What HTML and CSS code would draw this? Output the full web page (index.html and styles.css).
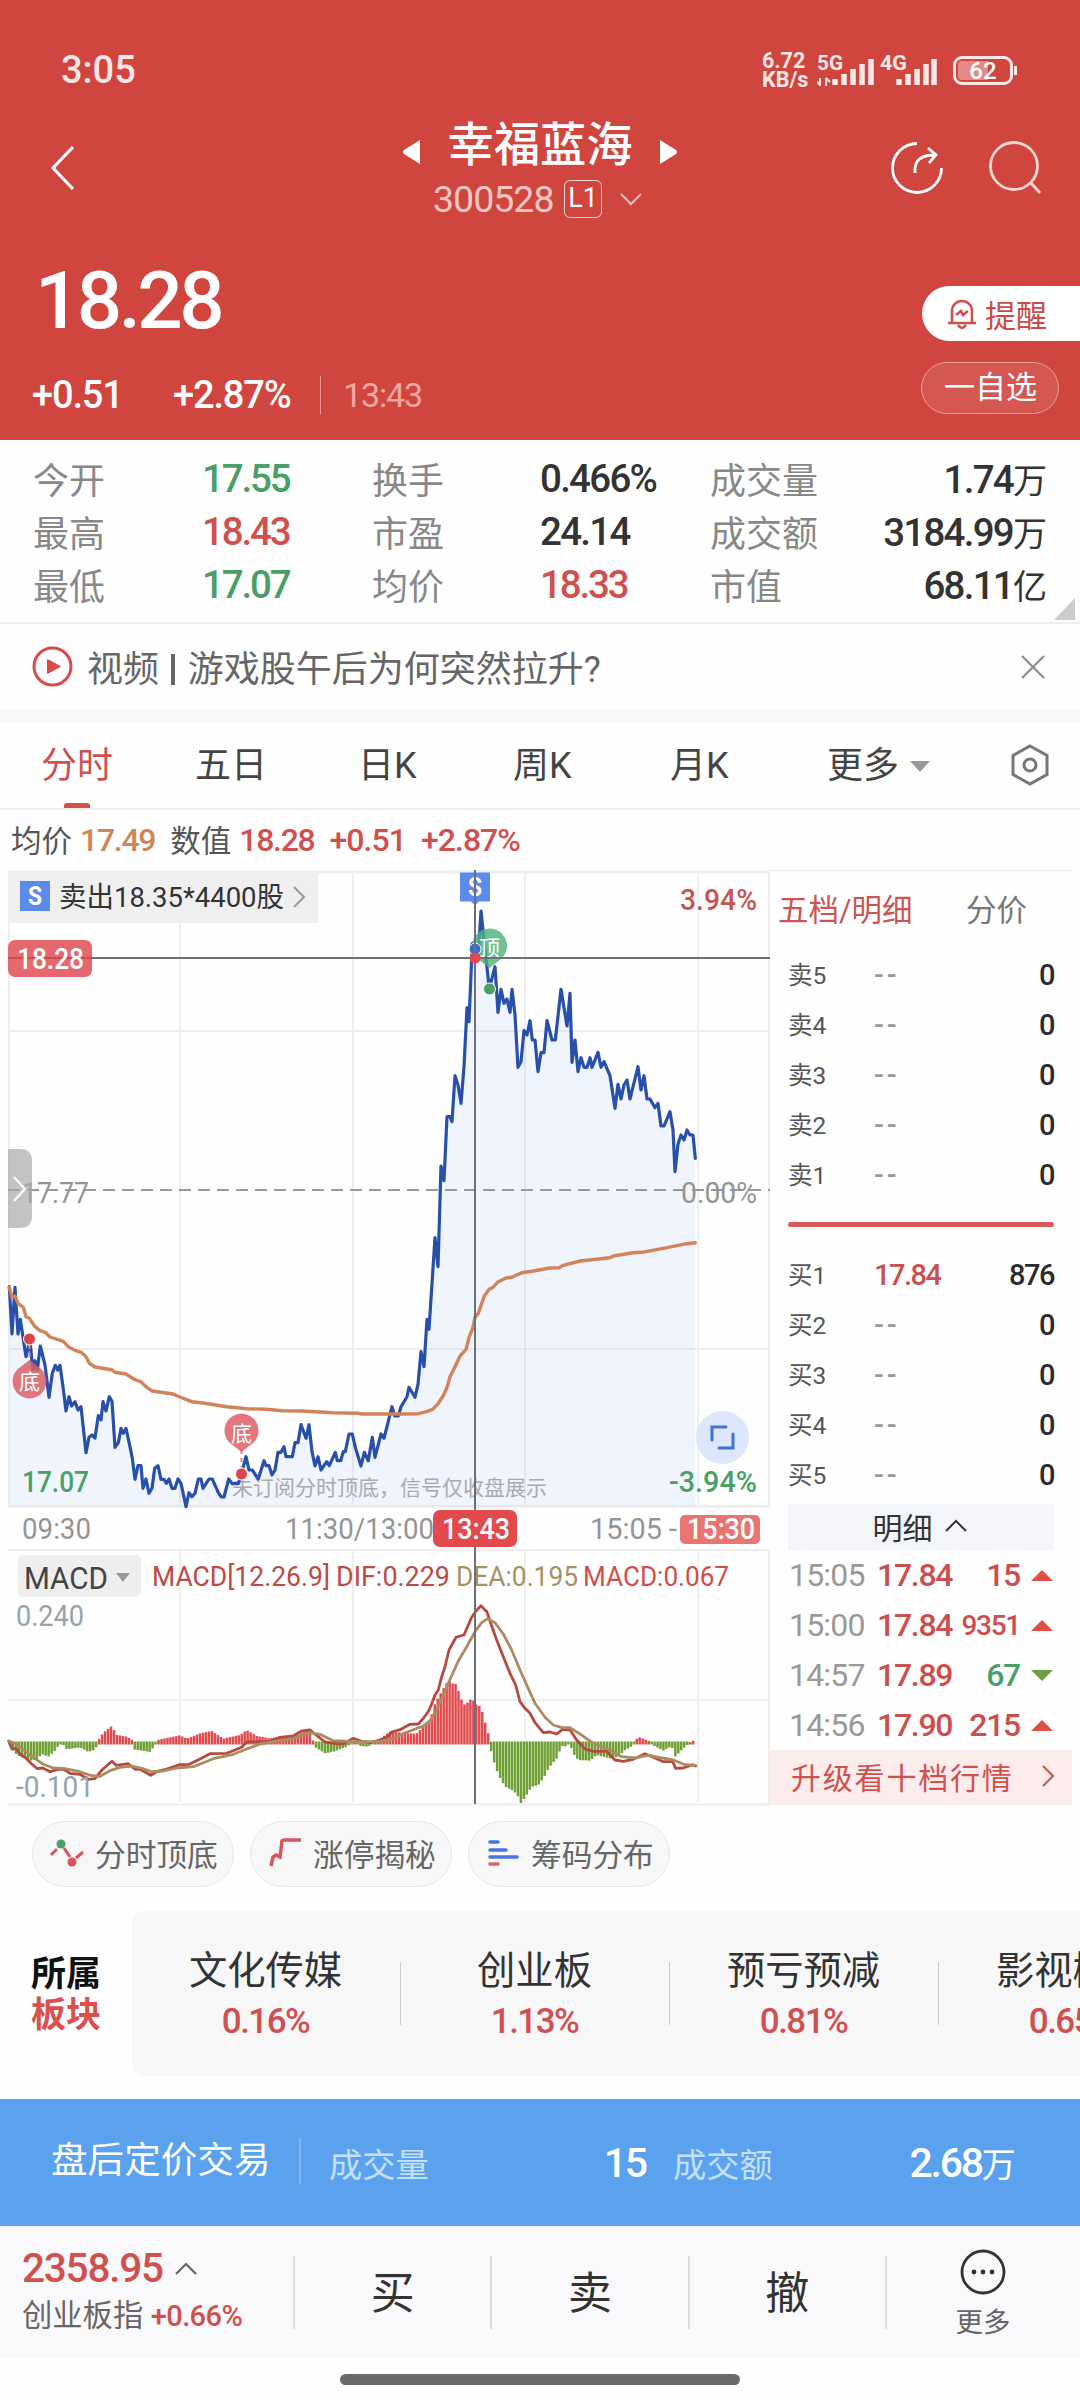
FILE: index.html
```html
<!DOCTYPE html>
<html lang="zh-CN">

<head>
  <meta charset="utf-8">
  <meta name="viewport" content="width=device-width, initial-scale=1.0">
  <title>幸福蓝海 300528</title>
  <link rel="stylesheet" href="styles.css">
</head>

<body>
  <header class="header">
    <div class="status">
      <span class="clock">3:05</span>
      <div class="speed"><span>6.72</span><span>KB/s</span></div>
      <svg class="signals" width="122" height="40" viewBox="820 48 122 40">
        <text x="820" y="68" textLength="26" lengthAdjust="spacingAndGlyphs">5G</text>
        <text x="883" y="68" textLength="27" lengthAdjust="spacingAndGlyphs">4G</text>
        <path d="M823 76v8M829 76v8M819 79l4 4M833 80l-4-4" stroke-width="2" />
        <path d="M838 83v-6M847 83v-11M856 83v-16M865 83v-21M874 83v-26M902 83v-6M911 83v-11M920 83v-16M929 83v-21M937 83v-26" stroke-width="5.5" />
      </svg>
      <div class="battery"><span>62</span></div>
    </div>

    <div class="title-bar">
      <svg class="back" width="26" height="46" viewBox="0 0 26 46"><path d="M23 2L3 23l20 21" /></svg>
      <div class="title">
        <div class="name">
          <svg width="17" height="24" viewBox="0 0 17 24"><path d="M17 0v24L1 14q-2-2 0-4z" fill="#fff" /></svg>
          <h1>幸福蓝海</h1>
          <svg width="17" height="24" viewBox="0 0 17 24"><path d="M0 0v24L16 14q2-2 0-4z" fill="#fff" /></svg>
        </div>
        <div class="code">
          <span class="num">300528</span>
          <span class="level">L1</span>
          <svg width="22" height="14" viewBox="0 0 22 14"><path d="M1 2l10 10L21 2" fill="none" stroke="#f3bbb7" stroke-width="2" /></svg>
        </div>
      </div>
      <svg class="share" width="54" height="54" viewBox="0 0 54 54"><path d="M27 2.500A24.500 24.500 0 1 0 51.500 27M25 32c-1-13 6-18 20-18M38 7l8 7-7 8" /></svg>
      <svg class="search" width="54" height="54" viewBox="0 0 54 54"><circle cx="26" cy="25" r="23.500" /><path d="M43 42l9 10" /></svg>
    </div>

    <div class="quote">
      <div>
        <div class="price num">18.28</div>
        <div class="change num">
          <span class="diff">+0.51</span>
          <span class="rate">+2.87%</span>
          <span class="time">13:43</span>
        </div>
      </div>
      <div class="actions">
        <div class="remind">
          <svg width="30" height="32" viewBox="0 0 30 32"><path d="M5 24V13a10 10 0 0 1 20 0v11M1 25h28M11 27q4 6 8 0M9 17l5-4 2 4 5-4" /></svg>
          提醒
        </div>
        <div class="watch">一自选</div>
      </div>
    </div>
  </header>

  <section class="stats">
    <span>今开</span><b class="num green">17.55</b><span>换手</span><b class="num">0.466%</b><span>成交量</span><b class="num last">1.74<i>万</i></b>
    <span>最高</span><b class="num red">18.43</b><span>市盈</span><b class="num">24.14</b><span>成交额</span><b class="num last">3184.99<i>万</i></b>
    <span>最低</span><b class="num green">17.07</b><span>均价</span><b class="num red">18.33</b><span>市值</span><b class="num last">68.11<i>亿</i></b>
    <div class="corner"></div>
  </section>

  <section class="news">
    <svg width="41" height="41" viewBox="0 0 41 41"><circle cx="20.500" cy="20.500" r="18.500" fill="none" stroke="#d94b4b" stroke-width="3" /><path d="M15.500 13.500v14l13-7z" fill="#d94b4b" stroke="#d94b4b" stroke-linejoin="round" /></svg>
    <p>视频 <em></em> 游戏股午后为何突然拉升?</p>
    <svg width="24" height="24" viewBox="0 0 24 24"><path d="M1 1l22 22M23 1L1 23" stroke="#888" stroke-width="2" /></svg>
  </section>

  <nav class="tabs">
    <a class="active">分时</a>
    <a>五日</a>
    <a>日K</a>
    <a>周K</a>
    <a>月K</a>
    <a class="more">更多</a>
    <svg width="40" height="42" viewBox="0 0 40 42"><path d="M20 2l17 9.500v19L20 40 3 30.500v-19z" /><circle cx="20" cy="21" r="6" /></svg>
  </nav>

  <div class="legend">
    <span>均价</span><b class="num orange">17.49</b><span>数值</span><b class="num red">18.28</b><b class="num red">+0.51</b><b class="num red">+2.87%</b>
  </div>

  <main class="market">
    <svg class="chart" width="770" height="936" viewBox="0 870 770 936">
      <g class="grid">
        <path d="M8 872H770M8 1506.500H770" stroke-width="3" />
        <path d="M8 1031H769M8 1349H769M9 871V1506M180 871V1508M353 871V1508M525 871V1508M698 871V1508M769 871V1508M8 1550H769M8 1700H769M180 1550V1802M353 1550V1802M525 1550V1802M698 1550V1802M769 1550V1804" />
        <path d="M8 1804.500H770" stroke-width="1.500" />
      </g>

      <!-- trade note -->
      <rect x="8" y="871" width="310" height="52" fill="#efefef" />
      <rect x="20" y="881" width="30" height="30" fill="#5c8bed" />
      <text class="badge" x="28" y="905" textLength="14" lengthAdjust="spacingAndGlyphs">S</text>
      <text class="note" x="59" y="907" textLength="225" lengthAdjust="spacingAndGlyphs">卖出18.35*4400股</text>
      <path d="M294 887l10 10-10 10" fill="none" stroke="#999" stroke-width="2" />

      <path id="area" fill="#5a95f5" fill-opacity=".09" />
      <text class="hint" x="232" y="1495" textLength="315">未订阅分时顶底，信号仅收盘展示</text>
      <path id="price" class="line" stroke="#2850aa" stroke-width="3.200" />
      <path id="average" class="line" stroke="#d3835a" stroke-width="3.400" />

      <path d="M8 1190H770" stroke="#999" stroke-width="2" stroke-dasharray="12 7" />
      <text class="axis gray" x="22" y="1203" textLength="67" lengthAdjust="spacingAndGlyphs">17.77</text>
      <text class="axis gray" x="681" y="1203" textLength="76" lengthAdjust="spacingAndGlyphs">0.00%</text>
      <text class="axis up" x="680" y="910" textLength="77" lengthAdjust="spacingAndGlyphs">3.94%</text>
      <text class="axis down" x="22" y="1492" textLength="67" lengthAdjust="spacingAndGlyphs">17.07</text>
      <text class="axis down" x="669" y="1492" textLength="88" lengthAdjust="spacingAndGlyphs">-3.94%</text>

      <!-- macd -->
      <g id="bars"></g>
      <path id="dif" class="line" stroke="#b9493f" stroke-width="2.800" />
      <path id="dea" class="line" stroke="#ab8c61" stroke-width="2.800" />
      <rect x="18" y="1555" width="123" height="42" rx="5" fill="#eee" />
      <text x="24" y="1589" class="macd" textLength="84" lengthAdjust="spacingAndGlyphs">MACD</text>
      <path d="M116 1573h14l-7 9z" fill="#999" />
      <text class="info" x="152" y="1586" fill="#bb4b43" textLength="178" lengthAdjust="spacingAndGlyphs">MACD[12.26.9]</text>
      <text class="info" x="336" y="1586" fill="#bb4b43" textLength="114" lengthAdjust="spacingAndGlyphs">DIF:0.229</text>
      <text class="info" x="456" y="1586" fill="#a8905f" textLength="122" lengthAdjust="spacingAndGlyphs">DEA:0.195</text>
      <text class="info" x="583" y="1586" fill="#d04f4c" textLength="146" lengthAdjust="spacingAndGlyphs">MACD:0.067</text>
      <text class="axis slate" x="16" y="1626" textLength="68" lengthAdjust="spacingAndGlyphs">0.240</text>
      <text class="axis slate" x="16" y="1797" textLength="78" lengthAdjust="spacingAndGlyphs">-0.101</text>

      <!-- time axis -->
      <text class="axis gray" x="22" y="1539" textLength="69" lengthAdjust="spacingAndGlyphs">09:30</text>
      <text class="axis gray" x="285" y="1539" textLength="149" lengthAdjust="spacingAndGlyphs">11:30/13:00</text>
      <text class="axis gray" x="590" y="1539" textLength="87" lengthAdjust="spacingAndGlyphs">15:05 -</text>
      <rect x="680" y="1515" width="80" height="29" rx="5" fill="#e87571" />
      <text class="axis white" x="687" y="1539" textLength="68" lengthAdjust="spacingAndGlyphs">15:30</text>

      <!-- signals -->
      <path d="M29.500 1345v15M241.500 1450v22" stroke="#e0878a" stroke-width="2" stroke-dasharray="4 4" />
      <g fill="#dc5f65" fill-opacity=".85">
        <path d="M29.500 1360l9 7a17 17 0 1 1-18 0z" />
        <path d="M241.500 1452l9-7a17 17 0 1 0-18 0z" />
      </g>
      <text class="pin" x="19" y="1389">底</text>
      <text class="pin" x="231" y="1441">底</text>
      <path d="M489.500 968l9-7a17.500 17.500 0 1 0-18 0z" fill="#4db07a" fill-opacity=".8" />
      <text class="pin" x="479" y="955">顶</text>
      <g stroke="#fff" stroke-width="1">
        <circle cx="29.500" cy="1339" r="6" fill="#d8474b" />
        <circle cx="241.500" cy="1474" r="6" fill="#d8474b" />
        <circle cx="489.500" cy="989" r="6" fill="#4a9f66" />
        <circle cx="475" cy="949" r="6" fill="#3a6fd0" />
      </g>
      <path d="M460 872.500h30v29h-11l-4 4-4-4h-11z" fill="#5c8bed" />
      <text class="badge" x="468" y="896" textLength="14" lengthAdjust="spacingAndGlyphs">S</text>

      <!-- crosshair -->
      <rect x="8" y="940" width="84" height="37" rx="7" fill="#e5686c" />
      <path d="M8 958H92" stroke="#c94d50" stroke-width="2" />
      <path d="M92 958H770M475 870V1804" stroke="#6b707b" stroke-width="2" />
      <circle cx="475" cy="958" r="5.500" fill="#e04a4e" />
      <text class="axis white" x="17" y="969" textLength="67" lengthAdjust="spacingAndGlyphs">18.28</text>
      <rect x="433" y="1510" width="84" height="37" rx="7" fill="#e24a4d" />
      <text class="axis white" x="442" y="1539" textLength="68" lengthAdjust="spacingAndGlyphs">13:43</text>

      <path d="M8 1149h12q12 0 12 12v55q0 12-12 12H8z" fill="#aaa" fill-opacity=".7" />
      <path d="M14 1177l11 12-11 12" fill="none" stroke="#fff" stroke-width="2" />

      <circle cx="722.500" cy="1437.500" r="26.500" fill="#dde7fb" />
      <path d="M712 1440v-13h14M719 1448h14v-14" fill="none" stroke="#3f72d9" stroke-width="3" stroke-linecap="round" />
    </svg>

    <aside class="book">
      <div class="book-tabs"><span class="active">五档/明细</span><span>分价</span></div>
      <div class="level-row"><span>卖5</span><i>--</i><b>0</b></div>
      <div class="level-row"><span>卖4</span><i>--</i><b>0</b></div>
      <div class="level-row"><span>卖3</span><i>--</i><b>0</b></div>
      <div class="level-row"><span>卖2</span><i>--</i><b>0</b></div>
      <div class="level-row"><span>卖1</span><i>--</i><b>0</b></div>
      <div class="ratio"></div>
      <div class="level-row"><span>买1</span><i class="red">17.84</i><b>876</b></div>
      <div class="level-row"><span>买2</span><i>--</i><b>0</b></div>
      <div class="level-row"><span>买3</span><i>--</i><b>0</b></div>
      <div class="level-row"><span>买4</span><i>--</i><b>0</b></div>
      <div class="level-row"><span>买5</span><i>--</i><b>0</b></div>
      <div class="detail">明细 <svg width="22" height="13" viewBox="0 0 22 13"><path d="M1 12L11 2l10 10" fill="none" stroke="#333" stroke-width="2" /></svg></div>
      <div class="tick num"><span>15:05</span><b>17.84</b><i>15</i><em></em></div>
      <div class="tick num"><span>15:00</span><b>17.84</b><i class="small">9351</i><em></em></div>
      <div class="tick num"><span>14:57</span><b>17.89</b><i class="green">67</i><em class="fall"></em></div>
      <div class="tick num"><span>14:56</span><b>17.90</b><i>215</i><em></em></div>
      <div class="upgrade">升级看十档行情 <svg width="12" height="22" viewBox="0 0 12 22"><path d="M1 1l10 10L1 21" fill="none" stroke="#d0504e" stroke-width="2" /></svg></div>
    </aside>
  </main>

  <div class="chips">
    <div class="chip">
      <svg width="34" height="32" viewBox="0 0 34 32"><path d="M1 18l6-6M14 11l6 9M26 21l7-6" fill="none" stroke="#d9555a" stroke-width="3" /><circle cx="11" cy="7" r="4.500" fill="#4a9f66" /><circle cx="22" cy="25" r="4.500" fill="#d9555a" /></svg>
      分时顶底
    </div>
    <div class="chip">
      <svg width="34" height="32" viewBox="0 0 34 32"><path d="M3 29l2-9 3-2 4 2 2-16q1-1 2-1h17" fill="none" stroke="#d9555a" stroke-width="3.500" /></svg>
      涨停揭秘
    </div>
    <div class="chip">
      <svg width="34" height="32" viewBox="0 0 34 32"><path d="M4 5h8M4 13h16M4 20h27" stroke="#4a76dc" stroke-width="3.500" stroke-linecap="round" /><path d="M4 27h8" stroke="#d9666a" stroke-width="3.500" stroke-linecap="round" /></svg>
      筹码分布
    </div>
  </div>

  <section class="sectors">
    <h2>所属<br><span>板块</span></h2>
    <div class="sector-list">
      <div class="sector">文化传媒<b class="num">0.16%</b></div>
      <div class="sector">创业板<b class="num">1.13%</b></div>
      <div class="sector">预亏预减<b class="num">0.81%</b></div>
      <div class="sector">影视概念<b class="num">0.65%</b></div>
    </div>
  </section>

  <section class="after-hours">
    <span class="label">盘后定价交易</span>
    <span class="key">成交量</span><b class="num volume">15</b>
    <span class="key">成交额</span><b class="num amount">2.68<i>万</i></b>
  </section>

  <footer class="footer">
    <div class="index">
      <div class="point num">2358.95 <svg width="22" height="13" viewBox="0 0 22 13"><path d="M1 12L11 2l10 10" fill="none" stroke="#666" stroke-width="2.200" /></svg></div>
      <div class="index-name">创业板指 <b class="num">+0.66%</b></div>
    </div>
    <div class="trade">买</div>
    <div class="trade">卖</div>
    <div class="trade">撤</div>
    <div class="others">
      <svg width="46" height="46" viewBox="0 0 46 46"><circle cx="23" cy="23" r="21" fill="none" stroke="#333" stroke-width="2.800" /><g fill="#333"><circle cx="14" cy="23" r="2.400" /><circle cx="23" cy="23" r="2.400" /><circle cx="32" cy="23" r="2.400" /></g></svg>
      更多
    </div>
  </footer>
  <div class="home-bar"></div>

  <script src="chart.js"></script>
</body>

</html>
```
FILE: styles.css
```css
* {
  box-sizing: border-box;
}

body {
  margin: 0;
  width: 1080px;
  height: 2400px;
  overflow: hidden;
  background-color: #fefefe;
  color: #333;
  font-family: Roboto, "Noto Sans CJK SC", sans-serif;
}

svg {
  display: block;
  flex: none;
}

i, em {
  font-style: normal;
}

b {
  font-weight: 500;
}

.num {
  font-weight: 500;
  letter-spacing: -0.045em;
}

.red {
  color: #d04f4f;
}

.green {
  color: #4a9f66;
}

.orange {
  color: #cf8657;
}

/* header */
.header {
  height: 440px;
  background-color: #d0453e;
  color: #fff;
}

.status {
  display: flex;
  align-items: center;
  height: 140px;
  padding-left: 61px;
}

.clock {
  width: 701px;
  font-size: 38px;
  font-weight: 500;
  color: #fde8e6;
}

.speed {
  display: flex;
  flex-direction: column;
  gap: 2px;
  width: 55px;
  font-size: 21.5px;
  line-height: 17px;
  font-weight: 700;
  color: #fde8e6;
}

.signals {
  stroke: #fde8e6;
  fill: none;
}

.signals text {
  stroke: none;
  fill: #fde8e6;
  font-size: 20px;
  font-weight: 700;
}

.battery {
  position: relative;
  width: 60px;
  height: 29px;
  margin-left: 14px;
  border: 3px solid #fde8e6;
  border-radius: 9px;
  background: linear-gradient(90deg, #e48a86 60%, transparent 60%);
  background-clip: content-box;
  padding: 2px;
  text-align: center;
  font-size: 24px;
  line-height: 20px;
  font-weight: 500;
}

.battery::after {
  content: "";
  position: absolute;
  right: -7px;
  top: 7px;
  width: 3px;
  height: 9px;
  background-color: #fde8e6;
}

.title-bar {
  display: flex;
  height: 98px;
  margin-top: -22px;
  padding-left: 50px;
}

.back {
  margin-top: 27px;
}

.back path {
  fill: none;
  stroke: #fff;
  stroke-width: 3.2;
}

.title {
  width: 602px;
  margin-left: 163px;
}

.name {
  display: flex;
  justify-content: center;
  align-items: center;
  height: 54px;
}

.name svg {
  margin-top: 14px;
}

.name h1 {
  margin: 0 27px;
  font-size: 46.3px;
  line-height: 54px;
  font-weight: 500;
}

.code {
  display: flex;
  align-items: center;
  height: 48px;
  margin-top: 3px;
  padding-left: 194px;
}

.code .num {
  width: 131px;
  font-size: 37.5px;
  letter-spacing: -1px;
  font-weight: 400;
  color: #f6c7c4;
}

.level {
  width: 38px;
  height: 38px;
  margin-right: 18px;
  border: 1.5px solid #f8d5d3;
  border-radius: 6px;
  font-size: 27px;
  line-height: 35px;
  text-align: center;
}

.share, .search {
  margin-top: 23px;
  fill: none;
  stroke: #fff;
  stroke-width: 2.8;
}

.share {
  margin-left: 49px;
}

.search {
  margin-left: 44px;
  stroke: #f9d5d3;
}

.quote {
  display: flex;
  justify-content: space-between;
  padding-top: 38px;
}

.price {
  height: 94px;
  margin-left: 35px;
  font-size: 80px;
  line-height: 94px;
}

.change {
  display: flex;
  align-items: center;
  height: 38px;
  margin-top: 28px;
  margin-left: 32px;
  font-size: 38px;
  letter-spacing: -0.03em;
}

.diff {
  width: 141px;
}

.rate {
  width: 147px;
}

.time {
  padding-left: 22px;
  border-left: 1px solid #e59792;
  font-size: 34px;
  font-weight: 400;
  line-height: 38px;
  color: #f0a8a3;
}

.actions {
  width: 159px;
  padding-top: 32px;
}

.remind {
  display: flex;
  align-items: center;
  gap: 8px;
  height: 55px;
  margin-left: 1px;
  padding-left: 25px;
  border-radius: 28px 0 0 28px;
  background-color: #fff;
  color: #cb4c47;
  font-size: 31px;
  margin-top: 0;
}

.remind path {
  fill: none;
  stroke: #d0504c;
  stroke-width: 2.6;
}

.watch {
  width: 138px;
  height: 52px;
  margin-top: 21px;
  padding-left: 22px;
  border: 1.5px solid #e8a19d;
  border-radius: 26px;
  background-color: #d45750;
  font-size: 31px;
  line-height: 49px;
}

/* stats */
.stats {
  position: relative;
  display: grid;
  grid-template-columns: 169px 170px 168px 170px 137px 200px;
  grid-auto-rows: 53px;
  align-items: center;
  height: 184px;
  padding: 12px 33px 0;
  border-bottom: 2px solid #eee;
}

.stats span {
  margin-top: -2px;
  font-size: 36px;
  color: #888;
}

.stats b {
  font-size: 38.5px;
}

.stats .green, .stats .red {
  letter-spacing: -0.055em;
}

.stats .last {
  text-align: right;
}

.stats i, .after-hours i {
  font-size: 34px;
  font-weight: 400;
  letter-spacing: 0;
}

.corner {
  position: absolute;
  left: 1054px;
  top: 158px;
  border-left: 21px solid transparent;
  border-bottom: 22px solid #ccc;
}

.news {
  display: flex;
  align-items: center;
  height: 85px;
  padding: 0 35px 0 32px;
}

.news p {
  flex: 1;
  margin: -1px 0 0 14px;
  font-size: 36px;
  color: #666;
}

.news em {
  display: inline-block;
  width: 4px;
  height: 31px;
  margin: 0 4px 0 3px;
  background-color: #666;
  vertical-align: -3px;
}

/* tabs */
.tabs {
  display: flex;
  height: 101px;
  border-top: 13px solid #f7f7f7;
  border-bottom: 2px solid #eee;
  padding-left: 41px;
  font-size: 36px;
  line-height: 88px;
  color: #444;
}

.tabs a {
  position: relative;
  width: 159px;
}

.tabs a:first-child {
  width: 154px;
}

.tabs a:nth-child(2) {
  width: 163px;
}

.tabs a:nth-child(3) {
  width: 155px;
}

.tabs a:nth-child(4) {
  width: 157px;
}

.tabs a:nth-child(5) {
  width: 157px;
}

.tabs .active {
  color: #d04f4f;
}

.tabs .active::after {
  content: "";
  position: absolute;
  left: 23px;
  bottom: 0;
  width: 26px;
  height: 5px;
  border-radius: 3px 3px 0 0;
  background-color: #d04f4f;
}

.tabs .more {
  width: 183px;
}

.tabs .more::after {
  content: "";
  display: inline-block;
  margin-left: 11px;
  border: 10px solid transparent;
  border-bottom: 0;
  border-top: 11px solid #999;
  vertical-align: 6px;
}

.tabs svg {
  margin-top: 22px;
  fill: none;
  stroke: #777;
  stroke-width: 3;
}

.legend {
  display: flex;
  align-items: center;
  height: 60px;
  padding-left: 11px;
  font-size: 30.5px;
  color: #555;
}

.legend span {
  margin-top: -2px;
}

.legend b {
  margin: 0 15px 0 8px;
  font-size: 32px;
  letter-spacing: -0.04em;
}

.legend b + b {
  margin-left: 0;
  letter-spacing: -0.03em;
}

/* chart and order book */
.market {
  display: flex;
  height: 936px;
}

.grid path {
  fill: none;
  stroke: #eee;
  stroke-width: 2;
}

.grid path:first-child {
  stroke-width: 3;
}

.line {
  fill: none;
  stroke-linejoin: round;
  stroke-linecap: round;
}

.chart text {
  font-weight: 400;
}

.chart .badge {
  font-size: 25px;
  font-weight: 700;
  fill: #fff;
}

.note {
  font-size: 28px;
  fill: #333;
}

.hint {
  font-size: 21px;
  fill: #aaa;
}

.chart .axis {
  font-size: 29.5px;
  font-weight: 500;
}

.chart .axis.gray, .chart .axis.slate {
  font-weight: 400;
}

.axis.gray {
  fill: #949494;
}

.axis.up {
  fill: #c95352;
}

.axis.down {
  fill: #4a9f66;
}

.axis.slate {
  fill: #96a3af;
}

.axis.white {
  fill: #fff;
}

.macd {
  font-size: 32px;
  fill: #444;
}

.chart .info {
  font-size: 27.5px;
  font-weight: 400;
}

.pin {
  font-size: 21px;
  fill: #fff;
}

.book {
  width: 302px;
  border-top: 1px solid #eee;
}

.book-tabs {
  display: flex;
  height: 79px;
  padding-left: 8px;
  font-size: 30.5px;
  line-height: 79px;
  color: #777;
}

.book-tabs span {
  flex: none;
  width: 188px;
}

.book-tabs span + span {
  width: auto;
}

.book-tabs .active {
  color: #cc5452;
}

.level-row {
  display: flex;
  align-items: center;
  height: 50px;
  padding: 0 18px 0 18px;
  color: #555;
  font-size: 24.5px;
}

.level-row span {
  width: 86px;
  margin-top: -3px;
}

.level-row i {
  flex: 1;
  font-size: 29px;
  letter-spacing: 3px;
  font-weight: 500;
  color: #999;
}

.level-row i.red {
  letter-spacing: -1.5px;
  color: #cb504d;
}

.level-row b {
  font-size: 29px;
  letter-spacing: -1.5px;
  color: #2c2c2c;
}

.ratio {
  height: 5px;
  margin: 22px 18px 23px;
  border-radius: 3px;
  background-color: #d95c5b;
}

.detail {
  display: flex;
  align-items: center;
  justify-content: center;
  gap: 12px;
  height: 46px;
  margin: 4px 18px 0;
  padding: 0 3px 3px 0;
  background-color: #f3f5fa;
  font-size: 30px;
}

.tick {
  display: flex;
  align-items: center;
  height: 50px;
  padding: 0 19px 0 19px;
  font-size: 32px;
  color: #cb504d;
  letter-spacing: -0.04em;
}

.tick span {
  width: 88px;
  font-weight: 400;
  letter-spacing: -0.025em;
  color: #999;
}

.tick b {
  width: 76px;
}

.tick i {
  flex: 1;
  text-align: right;
}

.tick .small {
  font-size: 28px;
}

.tick em {
  margin-left: 11px;
  border: 11px solid transparent;
  border-top: 0;
  border-bottom: 11px solid #e04f44;
}

.tick .fall {
  border-bottom: 0;
  border-top: 11px solid #6ca046;
}

.upgrade {
  display: flex;
  align-items: center;
  justify-content: space-between;
  height: 55px;
  padding: 0 18px 3px 21px;
  background-color: #fcecec;
  color: #d0504e;
  font-size: 30px;
  letter-spacing: 1.8px;
}

.chips {
  display: flex;
  gap: 16px;
  padding: 15px 32px 0;
}

.chip {
  display: flex;
  align-items: center;
  gap: 11px;
  width: 202px;
  height: 66px;
  padding: 0 0 3px 17px;
  border: 1.5px solid #e6e6e6;
  border-radius: 33px;
  background-color: #f7f7f7;
  color: #666;
  font-size: 30.7px;
  white-space: nowrap;
}

/* sectors */
.sectors {
  display: flex;
  height: 165px;
  margin-top: 24px;
}

.sectors h2 {
  width: 132px;
  margin: 0;
  padding: 43px 0 0 31px;
  font-size: 35px;
  line-height: 41px;
  font-weight: 700;
  color: #111;
}

.sectors h2 span {
  color: #d9504f;
}

.sector-list {
  display: flex;
  width: 948px;
  overflow: hidden;
  border-radius: 12px 0 0 12px;
  background-color: #f7f7f7;
}

.sector {
  position: relative;
  flex: none;
  width: 269px;
  padding: 33px 2px 0 0;
  text-align: center;
  font-size: 38.3px;
  line-height: 54px;
}

.sector + .sector::before {
  content: "";
  position: absolute;
  left: -1px;
  top: 51px;
  width: 1px;
  height: 63px;
  background-color: #ccc;
}

.sector b {
  display: block;
  font-size: 35px;
  line-height: 48px;
  color: #d04f4f;
}

.after-hours {
  display: flex;
  align-items: center;
  height: 127px;
  margin-top: 23px;
  padding-left: 51px;
  background-color: #5aa2ee;
  color: #fff;
}

.label {
  width: 250px;
  margin-top: -3px;
  margin-right: 28px;
  border-right: 2px solid #7cb6f2;
  font-size: 36.6px;
  line-height: 46px;
}

.key {
  font-size: 33.3px;
  color: #c3e1fc;
}

.after-hours .num {
  font-size: 41px;
  letter-spacing: -0.055em;
}

.after-hours i {
  letter-spacing: 0;
}

.volume {
  width: 217px;
  margin-right: 27px;
  text-align: right;
}

.amount {
  width: 243px;
  text-align: right;
}

/* footer */
.footer {
  display: flex;
  align-items: center;
  height: 132px;
  background-color: #f9f9fc;
}

.index {
  width: 293px;
  padding-left: 22px;
}

.point {
  display: flex;
  align-items: center;
  gap: 12px;
  height: 50px;
  margin-top: -2px;
  font-size: 40.5px;
  letter-spacing: -0.03em;
  color: #d0504c;
}

.index-name {
  font-size: 30.3px;
  line-height: 46px;
  color: #666;
}

.index-name .num {
  font-size: 29px;
  letter-spacing: -0.02em;
  color: #d0504c;
}

.trade, .others {
  flex: none;
  width: 197.3px;
  height: 73px;
  border-left: 2px solid #ddd;
  text-align: center;
  font-size: 44px;
  line-height: 76px;
}

.others {
  width: 194px;
  font-size: 27.5px;
  line-height: 38px;
  color: #666;
}

.others svg {
  margin: -7px auto 9px;
}

.home-bar {
  width: 400px;
  height: 11px;
  margin: 16px auto 0;
  border-radius: 6px;
  background-color: #6b6b6b;
}
```
FILE: chart.js
```js
// points are kept in thirds of a pixel, each list with its own origin
const morning = '28,290 36,432 45,292 54,432 61,388 78,500 90,450 98,540 105,512 112,540 121,468 135,525 147,622 157,550 166,526 173,540 180,526 189,590 198,663 207,620 215,648 225,635 234,660 243,650 258,788 267,742 276,735 285,744 295,677 303,690 309,635 318,663 328,620 336,634 345,772 355,758 363,715 370,730 378,715 390,770 397,805 405,868 414,827 423,827 429,895 438,867 447,910 456,895 464,835 474,827 483,868 492,868 499,880 507,867 516,895 525,895 534,867 543,880 558,950 567,908 576,920 585,910 595,867 603,867 609,895 627,867 637,867 655,908 664,921 672,921 686,867 697,881 715,881 724,852 738,800 747,840 757,840 775,867 792,812 798,827 807,827 816,855 825,840 834,787 843,787 852,770 858,800 877,800 885,758 894,758 903,704 918,745 927,704 936,785 945,828 954,800 963,840 980,815 988,827 1006,787 1012,812 1022,812 1030,785 1036,785 1047,732 1057,732 1066,772 1083,828 1093,787 1105,812 1117,742 1125,802 1143,732 1152,745 1176,650 1184,678 1195,678 1203,650 1221,620 1227,592 1245,622 1254,583 1263,485 1272,530 1281,388 1287,418 1305,143 1314,230';
const afternoon = '123,918 132,962 141,770 150,770 156,785 165,647 174,675 183,730 192,620 201,443 207,485 217,250 225,270 234,300 243,153 252,240 268,386 285,320 294,457 303,388 312,430 321,417 330,457 336,388 345,465 354,622 363,605 372,512 381,525 390,482 397,540 405,540 414,635 423,578 432,578 441,482 456,540 466,540 483,388 501,498 510,400 516,607 525,540 534,635 543,593 552,622 561,622 570,593 576,622 594,577 603,622 612,605 630,647 645,745 654,673 663,717 672,675 681,660 690,717 714,620 723,690 732,647 741,717 750,717 765,743 774,730 783,798 792,798 810,755 819,810 825,935 834,852 843,825 852,840 861,810 870,825 879,825 886,895';
const average = '28,292 36,322 45,318 54,340 70,352 78,380 88,385 105,410 120,422 136,427 150,441 190,454 205,470 225,481 245,488 258,500 268,520 285,531 335,539 345,547 378,552 405,569 422,575 440,592 457,603 515,611 540,621 575,635 615,640 680,650 740,656 800,658 845,662 905,663 1000,668 1075,670 1085,672 1200,672 1255,671 1280,665 1298,658 1315,640 1330,617 1342,590 1350,560 1365,530 1380,498 1398,478 1407,442 1418,415 1425,382 1435,370 1453,318 1468,297 1478,293 1495,275 1518,264 1535,262 1565,248 1600,243 1650,234 1678,233 1690,226 1740,213 1830,203 1840,198 1900,188 1925,187 1990,175 2060,161 2086,158';

const dif1 = '26,603 36,627 48,625 60,642 75,652 95,672 112,686 128,684 150,695 175,688 190,687 210,700 240,703 265,718 285,716 300,697 310,686 336,664 348,676 385,671 405,688 420,688 452,706 470,695 500,687 540,674 565,674 600,657 630,641 680,640 725,622 740,606 810,604 840,592 880,588 905,573 930,570 950,586 975,606 1000,610 1030,612 1060,595 1085,604 1110,608';
const dif2 = '0,600 20,592 35,576 60,569 90,553 115,552 130,535 145,515 155,492 165,465 175,450 185,410 195,380 207,330 228,292 240,288 252,285 262,262 275,232 288,213 303,197 313,208 320,214 335,258 350,300 370,350 390,400 407,435 420,485 435,505 450,520 465,548 490,578 510,576 530,582 548,568 570,570 590,600 615,627 640,634 680,634 705,660 730,664 760,658 795,641 830,656 850,665 878,665 887,685 910,684 938,674 947,678';
const dea1 = '26,603 50,612 75,633 100,652 130,673 160,684 195,686 240,695 275,707 300,709 330,692 360,682 395,678 430,686 455,695 490,693 530,684 580,680 640,656 700,643 740,627 780,612 820,605 880,595 930,578 960,583 1000,602 1060,605';
const dea2 = '0,605 40,595 80,577 130,558 150,542 170,510 190,465 210,418 235,363 260,320 285,275 305,248 323,236 345,248 370,282 395,330 420,390 440,435 465,490 495,532 520,555 545,563 570,563 600,582 640,610 690,630 725,650 765,654 805,646 880,660 915,674 947,676';
const bars1 = '26,612 45,640 60,650 90,662 110,658 125,642 145,650 165,632 178,612 188,612 200,628 240,622 265,636 285,628 292,615 295,600 310,578 335,558 350,585 380,590 398,601 402,628 450,636 465,615 472,600 540,586 560,596 600,580 635,573 670,596 720,585 740,570 770,588 810,595 840,590 880,590 925,570 938,598 943,620 975,640 1000,635 1040,620 1055,610 1063,602 1075,604 1080,618 1105,620 1115,612 1125,602';
const bars2 = '0,596 30,575 90,580 108,582 130,560 150,540 165,490 185,455 205,420 215,430 228,432 238,460 250,495 262,488 275,475 290,495 303,500 312,540 323,565 328,612 340,660 355,705 375,740 400,752 412,765 422,790 435,772 455,740 475,735 490,715 505,685 530,655 545,618 563,620 568,602 572,603 575,635 595,660 630,662 650,645 690,655 715,650 735,630 760,616 765,601 775,591 790,596 806,603 812,612 850,632 875,618 885,650 910,625 925,612 934,602 941,602 945,614';

function parse(text, x0, y0) {
  return text.split(' ').map(p => {
    const [x, y] = p.split(',').map(Number);
    return [x0 + x / 3, y0 + y / 3];
  });
}

function draw(id, points) {
  const d = 'M' + points.map(p => p[0].toFixed(1) + ' ' + p[1].toFixed(1)).join('L');
  document.getElementById(id).setAttribute('d', d);
  return d;
}

const line = draw('price', parse(morning, 0, 1190).concat(parse(afternoon, 400, 860)));
document.getElementById('area').setAttribute('d', line + 'V1506H9Z');
draw('average', parse(average, 0, 1190));
draw('dif', parse(dif1, 0, 1540).concat(parse(dif2, 380, 1540)));
draw('dea', parse(dea1, 0, 1540).concat(parse(dea2, 380, 1540)));

// histogram, one bar per minute
const bars = parse(bars1, 0, 1540).concat(parse(bars2, 380, 1540));
let html = '';
for (let x = 10; x < 696; x += 2.97) {
  let i = 1;
  while (i < bars.length - 1 && bars[i][0] < x) i++;
  const [ax, ay] = bars[i - 1];
  const [bx, by] = bars[i];
  const t = Math.min(1, Math.max(0, (x - ax) / (bx - ax)));
  const y = ay + (by - ay) * t;
  const up = y < 1742.7;
  const top = up ? y : 1741.5;
  const bottom = up ? 1744.5 : Math.max(y, 1744.5);
  html += `<rect x="${(x - 1.2).toFixed(2)}" y="${top.toFixed(1)}" width="2.5" height="${(bottom - top).toFixed(1)}" fill="${up ? '#e04b4e' : '#6fa033'}"/>`;
}
document.getElementById('bars').innerHTML = html;
```
